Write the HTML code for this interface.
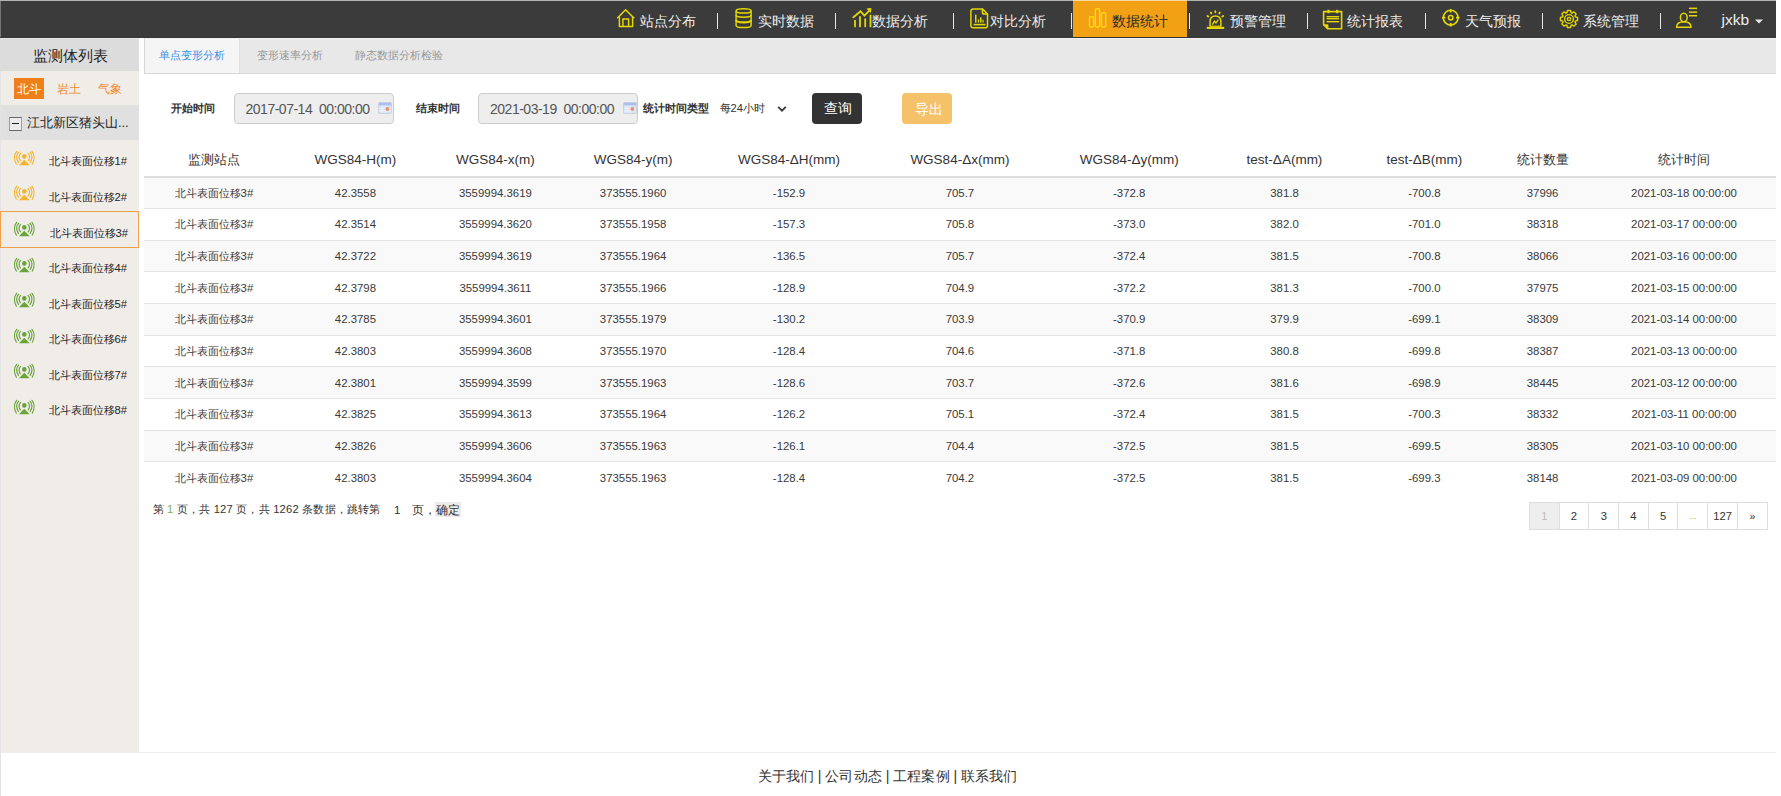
<!DOCTYPE html>
<html><head><meta charset="utf-8"><style>
*{box-sizing:border-box;margin:0;padding:0}
html,body{width:1781px;height:796px;overflow:hidden;background:#fff}
body{font-family:"Liberation Sans",sans-serif;color:#333;position:relative}
.a{position:absolute;white-space:nowrap}
svg{position:absolute;overflow:visible}
#top{position:absolute;left:0;top:0;width:1776px;height:38px;background:#3b3b3b}
#act{position:absolute;left:1073px;top:0;width:114px;height:38px;background:#f2a115}
.sep{position:absolute;top:13px;width:1px;height:16px;background:#e4e8e8}
#side{position:absolute;left:0;top:38px;width:139px;height:714px;background:#f0ede9;border-left:1px solid #e3e3e3}
#sidehd{position:absolute;left:0;top:38px;width:139px;height:33px;background:#dcdcdc}
#tabs{position:absolute;left:144px;top:38px;width:1632px;height:36px;background:#e8e8e8;border-bottom:1px solid #d8d8d8;border-left:1px solid #d8d8d8}
#tab1{position:absolute;left:145px;top:38px;width:95px;height:35px;background:#f5f5f5;border-right:1px solid #e0e0e0}
#foot{position:absolute;left:0;top:752px;width:1776px;height:44px;border-top:1px solid #eceeee;border-left:1px solid #e3e3e3}
.inp{position:absolute;top:93px;height:31px;background:#eee;border:1px solid #ccc;border-radius:4px}
.btn{position:absolute;top:93px;width:50px;height:31px;border-radius:4px}
table{position:absolute;left:144px;top:138px;border-collapse:collapse;table-layout:fixed}
td,th{text-align:center;white-space:nowrap;overflow:hidden;padding:0}
th{height:40px;font-weight:normal;font-size:14px;color:#333;border-bottom:2px solid #ddd}
td{font-size:12px;color:#333;border-top:1px solid #e4e4e4}
tr.odd td{background:#f9f9f9}
.pg{position:absolute;top:502px;height:28px;border:1px solid #ddd;font-size:12px;line-height:27px;text-align:center;color:#333}
</style></head><body>
<div id="top"><div id="act"></div></div><div class="a" style="left:0;top:0;width:1776px;height:1px;background:rgba(255,255,255,0.62)"></div><div class="a" style="left:0;top:1px;width:1px;height:37px;background:rgba(255,255,255,0.3)"></div>
<div class="sep" style="left:717px"></div>
<div class="sep" style="left:835px"></div>
<div class="sep" style="left:953px"></div>
<div class="sep" style="left:1071px"></div>
<div class="sep" style="left:1189px"></div>
<div class="sep" style="left:1307px"></div>
<div class="sep" style="left:1425px"></div>
<div class="sep" style="left:1542px"></div>
<div class="sep" style="left:1660px"></div>
<div class="a" style="left:640px;top:12px;font-size:14px;line-height:19.6px;color:#ececec;font-weight:normal;">站点分布</div>
<div class="a" style="left:757.5px;top:12px;font-size:14px;line-height:19.6px;color:#ececec;font-weight:normal;">实时数据</div>
<div class="a" style="left:871.5px;top:12px;font-size:14px;line-height:19.6px;color:#ececec;font-weight:normal;">数据分析</div>
<div class="a" style="left:989.6px;top:12px;font-size:14px;line-height:19.6px;color:#ececec;font-weight:normal;">对比分析</div>
<div class="a" style="left:1111.8px;top:12px;font-size:14px;line-height:19.6px;color:#2a2a2a;font-weight:normal;">数据统计</div>
<div class="a" style="left:1229.6px;top:12px;font-size:14px;line-height:19.6px;color:#ececec;font-weight:normal;">预警管理</div>
<div class="a" style="left:1346.6px;top:12px;font-size:14px;line-height:19.6px;color:#ececec;font-weight:normal;">统计报表</div>
<div class="a" style="left:1464.6px;top:12px;font-size:14px;line-height:19.6px;color:#ececec;font-weight:normal;">天气预报</div>
<div class="a" style="left:1583px;top:12px;font-size:14px;line-height:19.6px;color:#ececec;font-weight:normal;">系统管理</div>
<div class="a" style="left:1721.5px;top:9.0px;font-size:15.5px;line-height:21.7px;color:#ececec;font-weight:normal;">jxkb</div>
<svg style="left:1754.8px;top:18.6px" width="9" height="5"><path d="M0 0.4 L8 0.4 L4 4.4 Z" fill="#e8e8e8"/></svg>
<svg style="left:616px;top:8px" width="20" height="20" viewBox="0 0 20 20"><g fill="none" stroke="#e3d800" stroke-width="1.5" stroke-linejoin="round"><path d="M1.2 10.3 L9.6 1.8 L18.2 10.3"/><path d="M3.4 8.4 V18.6 H16.6 V8.4"/><path d="M6.9 18.6 V11.1 H12.6 V18.6"/></g></svg>
<svg style="left:735px;top:8px" width="18" height="21" viewBox="0 0 18 21"><g fill="none" stroke="#e3d800" stroke-width="1.5"><ellipse cx="8.6" cy="2.9" rx="7.5" ry="2.1"/><path d="M1.1 2.9 V17.4 Q1.1 19.6 8.6 19.6 Q16.1 19.6 16.1 17.4 V2.9"/><path d="M1.1 7 Q1.1 9.2 8.6 9.2 Q16.1 9.2 16.1 7"/><path d="M1.1 12 Q1.1 14.4 8.6 14.4 Q16.1 14.4 16.1 12" stroke-width="2.1"/></g></svg>
<svg style="left:852px;top:7px" width="20" height="21" viewBox="0 0 20 21"><g fill="none" stroke="#e3d800" stroke-width="1.8" stroke-linecap="round"><path d="M3 13.6 V19.4"/><path d="M8 9.8 V19.4"/><path d="M13.2 12.2 V19.4"/><path d="M18.5 8.5 V19.4"/><path d="M1.4 10.3 L8.5 4.2 L12.4 8.6 L17.5 3.4" stroke-linejoin="miter"/></g><path d="M14.4 1.6 L19.4 1 L18.8 6 Z" fill="#e3d800"/></svg>
<svg style="left:969px;top:7px" width="21" height="23" viewBox="0 0 21 23"><g fill="none" stroke="#e3d800" stroke-width="1.5" stroke-linejoin="round"><path d="M4.2 1.9 H13.4 L18.5 7 V18.4 Q18.5 20.8 16.1 20.8 H4.2 Q1.9 20.8 1.9 18.4 V4.2 Q1.9 1.9 4.2 1.9 Z"/><path d="M13.4 2.1 V5.2 Q13.4 7 15.2 7 H18.3"/></g><g fill="#e3d800"><rect x="6" y="7.6" width="1.5" height="8"/><rect x="8.8" y="12.4" width="1.2" height="3.2"/><rect x="11" y="10.4" width="1.5" height="5.2"/><rect x="13.4" y="12.8" width="1.2" height="2.8"/><rect x="4.6" y="16.8" width="11.8" height="1.6"/></g></svg>
<svg style="left:1087px;top:7px" width="21" height="22" viewBox="0 0 21 22"><g fill="none" stroke="#ffe800" stroke-width="1.25"><rect x="2.5" y="9.6" width="4.1" height="10.6" rx="1.8"/><rect x="8.4" y="1.6" width="4.2" height="18.6" rx="1.8"/><rect x="14.5" y="5.5" width="4.2" height="14.7" rx="1.8"/></g></svg>
<svg style="left:1205px;top:9px" width="21" height="22" viewBox="0 0 21 22"><g fill="none" stroke="#e3d800" stroke-width="1.5"><path d="M5 17.6 V12.8 Q5 6.9 10.4 6.9 Q15.9 6.9 15.9 12.8 V17.6"/><path d="M5 17.2 H15.9" stroke-width="1.2"/><path d="M7.4 15.6 L9.4 12.2 L11 14 L13.2 10.6" stroke-width="1.3"/><path d="M3.29 7.51 L2.51 6.89 M6.31 4.45 L5.89 3.55 M10.30 3.30 L10.30 2.30 M14.29 4.45 L14.71 3.55 M17.31 7.51 L18.09 6.89" stroke-width="1.9" stroke-linecap="round"/></g><g fill="#e3d800"><rect x="1.8" y="17.8" width="17.4" height="2.2"/></g></svg>
<svg style="left:1322px;top:9px" width="23" height="23" viewBox="0 0 23 23"><g fill="none" stroke="#e3d800" stroke-width="1.6" stroke-linejoin="round"><path d="M3 2.6 H19.6 V19.8 H5.6 L1.6 15.8 V2.6 Z" /><path d="M5.6 19.8 V16 H1.8"/></g><path d="M1.8 16 H5.6 V19.8 Z" fill="#e3d800"/><g fill="#e3d800"><rect x="5.4" y="0.8" width="2.2" height="3.4"/><rect x="14" y="0.8" width="2.2" height="3.4"/><rect x="4.6" y="7" width="12.4" height="1.4"/><rect x="4.6" y="9" width="12.4" height="1.4"/><rect x="4.6" y="12" width="12.4" height="1.4"/></g></svg>
<svg style="left:1440px;top:6px" width="22" height="22" viewBox="0 0 22 22"><g fill="none" stroke="#e3d800" stroke-width="1.6"><circle cx="10.7" cy="11.7" r="7.4"/><circle cx="10.7" cy="11.7" r="2.2"/><path d="M10.7 2.9 V6.4 M10.7 17 V20.5 M1.9 11.7 H5.4 M16 11.7 H19.5" stroke-width="1.8"/></g></svg>
<svg style="left:1559px;top:8px" width="21" height="22" viewBox="0 0 21 22"><g fill="none" stroke="#e3d800" stroke-width="1.4" stroke-linejoin="round"><path d="M7.85 4.76 L8.49 2.43 L11.51 2.43 L12.15 4.76 L12.89 5.07 L14.99 3.87 L17.13 6.01 L15.93 8.11 L16.24 8.85 L18.57 9.49 L18.57 12.51 L16.24 13.15 L15.93 13.89 L17.13 15.99 L14.99 18.13 L12.89 16.93 L12.15 17.24 L11.51 19.57 L8.49 19.57 L7.85 17.24 L7.11 16.93 L5.01 18.13 L2.87 15.99 L4.07 13.89 L3.76 13.15 L1.43 12.51 L1.43 9.49 L3.76 8.85 L4.07 8.11 L2.87 6.01 L5.01 3.87 L7.11 5.07 Z"/><circle cx="10" cy="11" r="4.4"/><circle cx="10" cy="11" r="1.6"/></g></svg>
<svg style="left:1675px;top:6px" width="24" height="23" viewBox="0 0 24 23"><g fill="none" stroke="#e3d800" stroke-width="1.5"><ellipse cx="8.8" cy="11.5" rx="3.4" ry="4.2"/><path d="M1.6 21.2 Q1.6 15.8 8.8 15.8 Q16 15.8 16 21.2 Z"/></g><g fill="#e3d800"><rect x="14" y="1.6" width="8" height="1.5"/><rect x="14" y="5.4" width="8" height="1.5"/><rect x="14" y="9" width="8" height="1.5"/></g></svg>
<div id="side"></div><div id="sidehd"></div>
<div class="a" style="left:32.5px;top:45.5px;font-size:14.5px;line-height:20.3px;color:#222;font-weight:normal;">监测体列表</div>
<div class="a" style="left:14px;top:78px;width:30px;height:21px;background:#ee7f1a"></div>
<div class="a" style="left:16.5px;top:80.5px;font-size:12.3px;line-height:17.22px;color:#fff;font-weight:normal;">北斗</div>
<div class="a" style="left:57px;top:80.5px;font-size:12.3px;line-height:17.22px;color:#f08a32;font-weight:normal;">岩土</div>
<div class="a" style="left:98px;top:80.5px;font-size:12.3px;line-height:17.22px;color:#f08a32;font-weight:normal;">气象</div>
<div class="a" style="left:1px;top:105px;width:138px;height:35px;background:#e0e0e0"></div>
<div class="a" style="left:9px;top:117px;width:12.5px;height:14px;border-top:1px solid #6a6a6a;border-bottom:1px solid #6a6a6a;border-left:1px solid #9a9aa8;border-right:1px solid #a89a9a;background:#ececec"></div><div class="a" style="left:12px;top:123px;width:6.5px;height:1px;background:#222"></div>
<div class="a" style="left:27px;top:113.5px;font-size:12.8px;line-height:17.92px;color:#222;font-weight:normal;">江北新区猪头山...</div>
<svg style="left:14px;top:150.5px" width="22" height="15" viewBox="0 0 22 15"><g fill="none" stroke="#f3b52e" stroke-width="1.15" stroke-linecap="round"><path d="M6.6 2.4 Q3.6 5.8 6.4 9.8"/><path d="M4.6 1.2 Q0.8 5.8 4.4 11.4"/><path d="M2.6 0.3 Q-1.6 6 2.4 13.2"/><path d="M14 2.4 Q17 5.8 14.2 9.8"/><path d="M16 1.2 Q19.8 5.8 16.2 11.4"/><path d="M18 0.3 Q22.2 6 18.2 13.2"/></g><g fill="#f3b52e"><circle cx="10.3" cy="5.4" r="2.3"/><path d="M4.9 14.2 L10.3 8.8 L15.7 14.2 Z"/></g></svg>
<div class="a" style="left:48.5px;top:154px;font-size:11.2px;line-height:15.68px;color:#222;font-weight:normal;">北斗表面位移1#</div>
<svg style="left:14px;top:186.0px" width="22" height="15" viewBox="0 0 22 15"><g fill="none" stroke="#f3b52e" stroke-width="1.15" stroke-linecap="round"><path d="M6.6 2.4 Q3.6 5.8 6.4 9.8"/><path d="M4.6 1.2 Q0.8 5.8 4.4 11.4"/><path d="M2.6 0.3 Q-1.6 6 2.4 13.2"/><path d="M14 2.4 Q17 5.8 14.2 9.8"/><path d="M16 1.2 Q19.8 5.8 16.2 11.4"/><path d="M18 0.3 Q22.2 6 18.2 13.2"/></g><g fill="#f3b52e"><circle cx="10.3" cy="5.4" r="2.3"/><path d="M4.9 14.2 L10.3 8.8 L15.7 14.2 Z"/></g></svg>
<div class="a" style="left:48.5px;top:189.5px;font-size:11.2px;line-height:15.68px;color:#222;font-weight:normal;">北斗表面位移2#</div>
<div class="a" style="left:0;top:211px;width:139px;height:37px;border:1px solid #f0a04b"></div>
<svg style="left:14px;top:222.0px" width="22" height="15" viewBox="0 0 22 15"><g fill="none" stroke="#6aa33a" stroke-width="1.15" stroke-linecap="round"><path d="M6.6 2.4 Q3.6 5.8 6.4 9.8"/><path d="M4.6 1.2 Q0.8 5.8 4.4 11.4"/><path d="M2.6 0.3 Q-1.6 6 2.4 13.2"/><path d="M14 2.4 Q17 5.8 14.2 9.8"/><path d="M16 1.2 Q19.8 5.8 16.2 11.4"/><path d="M18 0.3 Q22.2 6 18.2 13.2"/></g><g fill="#6aa33a"><circle cx="10.3" cy="5.4" r="2.3"/><path d="M4.9 14.2 L10.3 8.8 L15.7 14.2 Z"/></g></svg>
<div class="a" style="left:49.5px;top:225.5px;font-size:11.2px;line-height:15.68px;color:#222;font-weight:normal;">北斗表面位移3#</div>
<svg style="left:14px;top:257.5px" width="22" height="15" viewBox="0 0 22 15"><g fill="none" stroke="#6aa33a" stroke-width="1.15" stroke-linecap="round"><path d="M6.6 2.4 Q3.6 5.8 6.4 9.8"/><path d="M4.6 1.2 Q0.8 5.8 4.4 11.4"/><path d="M2.6 0.3 Q-1.6 6 2.4 13.2"/><path d="M14 2.4 Q17 5.8 14.2 9.8"/><path d="M16 1.2 Q19.8 5.8 16.2 11.4"/><path d="M18 0.3 Q22.2 6 18.2 13.2"/></g><g fill="#6aa33a"><circle cx="10.3" cy="5.4" r="2.3"/><path d="M4.9 14.2 L10.3 8.8 L15.7 14.2 Z"/></g></svg>
<div class="a" style="left:48.5px;top:261px;font-size:11.2px;line-height:15.68px;color:#222;font-weight:normal;">北斗表面位移4#</div>
<svg style="left:14px;top:293.0px" width="22" height="15" viewBox="0 0 22 15"><g fill="none" stroke="#6aa33a" stroke-width="1.15" stroke-linecap="round"><path d="M6.6 2.4 Q3.6 5.8 6.4 9.8"/><path d="M4.6 1.2 Q0.8 5.8 4.4 11.4"/><path d="M2.6 0.3 Q-1.6 6 2.4 13.2"/><path d="M14 2.4 Q17 5.8 14.2 9.8"/><path d="M16 1.2 Q19.8 5.8 16.2 11.4"/><path d="M18 0.3 Q22.2 6 18.2 13.2"/></g><g fill="#6aa33a"><circle cx="10.3" cy="5.4" r="2.3"/><path d="M4.9 14.2 L10.3 8.8 L15.7 14.2 Z"/></g></svg>
<div class="a" style="left:48.5px;top:296.5px;font-size:11.2px;line-height:15.68px;color:#222;font-weight:normal;">北斗表面位移5#</div>
<svg style="left:14px;top:328.5px" width="22" height="15" viewBox="0 0 22 15"><g fill="none" stroke="#6aa33a" stroke-width="1.15" stroke-linecap="round"><path d="M6.6 2.4 Q3.6 5.8 6.4 9.8"/><path d="M4.6 1.2 Q0.8 5.8 4.4 11.4"/><path d="M2.6 0.3 Q-1.6 6 2.4 13.2"/><path d="M14 2.4 Q17 5.8 14.2 9.8"/><path d="M16 1.2 Q19.8 5.8 16.2 11.4"/><path d="M18 0.3 Q22.2 6 18.2 13.2"/></g><g fill="#6aa33a"><circle cx="10.3" cy="5.4" r="2.3"/><path d="M4.9 14.2 L10.3 8.8 L15.7 14.2 Z"/></g></svg>
<div class="a" style="left:48.5px;top:332px;font-size:11.2px;line-height:15.68px;color:#222;font-weight:normal;">北斗表面位移6#</div>
<svg style="left:14px;top:364.0px" width="22" height="15" viewBox="0 0 22 15"><g fill="none" stroke="#6aa33a" stroke-width="1.15" stroke-linecap="round"><path d="M6.6 2.4 Q3.6 5.8 6.4 9.8"/><path d="M4.6 1.2 Q0.8 5.8 4.4 11.4"/><path d="M2.6 0.3 Q-1.6 6 2.4 13.2"/><path d="M14 2.4 Q17 5.8 14.2 9.8"/><path d="M16 1.2 Q19.8 5.8 16.2 11.4"/><path d="M18 0.3 Q22.2 6 18.2 13.2"/></g><g fill="#6aa33a"><circle cx="10.3" cy="5.4" r="2.3"/><path d="M4.9 14.2 L10.3 8.8 L15.7 14.2 Z"/></g></svg>
<div class="a" style="left:48.5px;top:367.5px;font-size:11.2px;line-height:15.68px;color:#222;font-weight:normal;">北斗表面位移7#</div>
<svg style="left:14px;top:399.5px" width="22" height="15" viewBox="0 0 22 15"><g fill="none" stroke="#6aa33a" stroke-width="1.15" stroke-linecap="round"><path d="M6.6 2.4 Q3.6 5.8 6.4 9.8"/><path d="M4.6 1.2 Q0.8 5.8 4.4 11.4"/><path d="M2.6 0.3 Q-1.6 6 2.4 13.2"/><path d="M14 2.4 Q17 5.8 14.2 9.8"/><path d="M16 1.2 Q19.8 5.8 16.2 11.4"/><path d="M18 0.3 Q22.2 6 18.2 13.2"/></g><g fill="#6aa33a"><circle cx="10.3" cy="5.4" r="2.3"/><path d="M4.9 14.2 L10.3 8.8 L15.7 14.2 Z"/></g></svg>
<div class="a" style="left:48.5px;top:403px;font-size:11.2px;line-height:15.68px;color:#222;font-weight:normal;">北斗表面位移8#</div>
<div id="tabs"></div><div id="tab1"></div>
<div class="a" style="left:0;top:37px;width:1776px;height:1px;background:#363636"></div><div class="a" style="left:0;top:38px;width:139px;height:1px;background:#e6e6e6"></div><div class="a" style="left:145px;top:38px;width:1631px;height:1px;background:#f1f1f1"></div>
<div class="a" style="left:158.5px;top:48px;font-size:11.3px;line-height:15.82px;color:#3a8ee6;font-weight:normal;">单点变形分析</div>
<div class="a" style="left:256.5px;top:48px;font-size:11.3px;line-height:15.82px;color:#999;font-weight:normal;">变形速率分析</div>
<div class="a" style="left:354.5px;top:48px;font-size:11.3px;line-height:15.82px;color:#999;font-weight:normal;">静态数据分析检验</div>
<div class="a" style="left:171px;top:101px;font-size:11.2px;line-height:15.68px;color:#333;font-weight:bold;">开始时间</div>
<div class="inp" style="left:234px;width:160px"></div>
<div class="a" style="left:245.5px;top:99.5px;font-size:14px;line-height:19.6px;color:#555;font-weight:normal;letter-spacing:-0.49px">2017-07-14&nbsp;&nbsp;00:00:00</div>
<svg style="left:378px;top:102px" width="14" height="12" viewBox="0 0 14 12"><rect x="0.5" y="0.5" width="13" height="11" rx="1" fill="#d9e3f7" stroke="#c4ccd8" stroke-width="0.8"/><rect x="0.8" y="0.8" width="12.4" height="2.6" fill="#a9bff0"/><g stroke="#f4f7fd" stroke-width="0.8"><path d="M4.3 3.5 V11 M7.6 3.5 V11 M0.8 6.3 H13 M0.8 8.9 H13"/></g><circle cx="9.3" cy="7" r="1.9" fill="#ee8c6e"/></svg>
<div class="a" style="left:415.5px;top:101px;font-size:11.2px;line-height:15.68px;color:#333;font-weight:bold;">结束时间</div>
<div class="inp" style="left:478px;width:160px"></div>
<div class="a" style="left:490px;top:99.5px;font-size:14px;line-height:19.6px;color:#555;font-weight:normal;letter-spacing:-0.49px">2021-03-19&nbsp;&nbsp;00:00:00</div>
<svg style="left:623px;top:102px" width="14" height="12" viewBox="0 0 14 12"><rect x="0.5" y="0.5" width="13" height="11" rx="1" fill="#d9e3f7" stroke="#c4ccd8" stroke-width="0.8"/><rect x="0.8" y="0.8" width="12.4" height="2.6" fill="#a9bff0"/><g stroke="#f4f7fd" stroke-width="0.8"><path d="M4.3 3.5 V11 M7.6 3.5 V11 M0.8 6.3 H13 M0.8 8.9 H13"/></g><circle cx="9.3" cy="7" r="1.9" fill="#ee8c6e"/></svg>
<div class="a" style="left:642.5px;top:101px;font-size:11.2px;line-height:15.68px;color:#333;font-weight:bold;">统计时间类型</div>
<div class="a" style="left:719.5px;top:101.3px;font-size:11.1px;line-height:15.54px;color:#333;font-weight:normal;">每24小时</div>
<svg style="left:777px;top:104.5px" width="10" height="8" viewBox="0 0 10 8"><path d="M1.2 1.9 L5 5.6 L8.8 1.9" fill="none" stroke="#3a3a3a" stroke-width="1.9"/></svg>
<div class="btn" style="left:812px;background:#333"></div>
<div class="a" style="left:824px;top:99.3px;font-size:13.6px;line-height:19.04px;color:#fff;font-weight:normal;">查询</div>
<div class="btn" style="left:902px;background:#f5c26a"></div>
<div class="a" style="left:914.5px;top:99.5px;font-size:13.6px;line-height:19.04px;color:#fff;font-weight:normal;">导出</div>
<div class="a" style="left:113.9px;top:151px;width:200px;text-align:center;font-size:13px;line-height:18px;color:#333">监测站点</div>
<div class="a" style="left:255.39999999999998px;top:151px;width:200px;text-align:center;font-size:13.5px;line-height:18px;color:#333">WGS84-H(m)</div>
<div class="a" style="left:395.4px;top:151px;width:200px;text-align:center;font-size:13.5px;line-height:18px;color:#333">WGS84-x(m)</div>
<div class="a" style="left:533.1px;top:151px;width:200px;text-align:center;font-size:13.5px;line-height:18px;color:#333">WGS84-y(m)</div>
<div class="a" style="left:689.0px;top:151px;width:200px;text-align:center;font-size:13.5px;line-height:18px;color:#333">WGS84-ΔH(mm)</div>
<div class="a" style="left:859.9px;top:151px;width:200px;text-align:center;font-size:13.5px;line-height:18px;color:#333">WGS84-Δx(mm)</div>
<div class="a" style="left:1029.2px;top:151px;width:200px;text-align:center;font-size:13.5px;line-height:18px;color:#333">WGS84-Δy(mm)</div>
<div class="a" style="left:1184.5px;top:151px;width:200px;text-align:center;font-size:13.5px;line-height:18px;color:#333">test-ΔA(mm)</div>
<div class="a" style="left:1324.4px;top:151px;width:200px;text-align:center;font-size:13.5px;line-height:18px;color:#333">test-ΔB(mm)</div>
<div class="a" style="left:1442.6px;top:151px;width:200px;text-align:center;font-size:13px;line-height:18px;color:#333">统计数量</div>
<div class="a" style="left:1584.0px;top:151px;width:200px;text-align:center;font-size:13px;line-height:18px;color:#333">统计时间</div>
<div class="a" style="left:144px;top:177.40px;width:1632px;height:31.65px;background:#f9f9f9;border-bottom:1px solid #e4e4e4"></div>
<div class="a" style="left:113.9px;top:184.70px;width:200px;text-align:center;font-size:11.4px;line-height:16px;color:#3a3a3a">北斗表面位移3#</div>
<div class="a" style="left:255.39999999999998px;top:184.70px;width:200px;text-align:center;font-size:11.4px;line-height:16px;color:#3a3a3a">42.3558</div>
<div class="a" style="left:395.4px;top:184.70px;width:200px;text-align:center;font-size:11.4px;line-height:16px;color:#3a3a3a">3559994.3619</div>
<div class="a" style="left:533.1px;top:184.70px;width:200px;text-align:center;font-size:11.4px;line-height:16px;color:#3a3a3a">373555.1960</div>
<div class="a" style="left:689.0px;top:184.70px;width:200px;text-align:center;font-size:11.4px;line-height:16px;color:#3a3a3a">-152.9</div>
<div class="a" style="left:859.9px;top:184.70px;width:200px;text-align:center;font-size:11.4px;line-height:16px;color:#3a3a3a">705.7</div>
<div class="a" style="left:1029.2px;top:184.70px;width:200px;text-align:center;font-size:11.4px;line-height:16px;color:#3a3a3a">-372.8</div>
<div class="a" style="left:1184.5px;top:184.70px;width:200px;text-align:center;font-size:11.4px;line-height:16px;color:#3a3a3a">381.8</div>
<div class="a" style="left:1324.4px;top:184.70px;width:200px;text-align:center;font-size:11.4px;line-height:16px;color:#3a3a3a">-700.8</div>
<div class="a" style="left:1442.6px;top:184.70px;width:200px;text-align:center;font-size:11.4px;line-height:16px;color:#3a3a3a">37996</div>
<div class="a" style="left:1584.0px;top:184.70px;width:200px;text-align:center;font-size:11.4px;line-height:16px;color:#3a3a3a">2021-03-18 00:00:00</div>
<div class="a" style="left:144px;top:209.05px;width:1632px;height:31.65px;background:#fff;border-bottom:1px solid #e4e4e4"></div>
<div class="a" style="left:113.9px;top:216.35px;width:200px;text-align:center;font-size:11.4px;line-height:16px;color:#3a3a3a">北斗表面位移3#</div>
<div class="a" style="left:255.39999999999998px;top:216.35px;width:200px;text-align:center;font-size:11.4px;line-height:16px;color:#3a3a3a">42.3514</div>
<div class="a" style="left:395.4px;top:216.35px;width:200px;text-align:center;font-size:11.4px;line-height:16px;color:#3a3a3a">3559994.3620</div>
<div class="a" style="left:533.1px;top:216.35px;width:200px;text-align:center;font-size:11.4px;line-height:16px;color:#3a3a3a">373555.1958</div>
<div class="a" style="left:689.0px;top:216.35px;width:200px;text-align:center;font-size:11.4px;line-height:16px;color:#3a3a3a">-157.3</div>
<div class="a" style="left:859.9px;top:216.35px;width:200px;text-align:center;font-size:11.4px;line-height:16px;color:#3a3a3a">705.8</div>
<div class="a" style="left:1029.2px;top:216.35px;width:200px;text-align:center;font-size:11.4px;line-height:16px;color:#3a3a3a">-373.0</div>
<div class="a" style="left:1184.5px;top:216.35px;width:200px;text-align:center;font-size:11.4px;line-height:16px;color:#3a3a3a">382.0</div>
<div class="a" style="left:1324.4px;top:216.35px;width:200px;text-align:center;font-size:11.4px;line-height:16px;color:#3a3a3a">-701.0</div>
<div class="a" style="left:1442.6px;top:216.35px;width:200px;text-align:center;font-size:11.4px;line-height:16px;color:#3a3a3a">38318</div>
<div class="a" style="left:1584.0px;top:216.35px;width:200px;text-align:center;font-size:11.4px;line-height:16px;color:#3a3a3a">2021-03-17 00:00:00</div>
<div class="a" style="left:144px;top:240.70px;width:1632px;height:31.65px;background:#f9f9f9;border-bottom:1px solid #e4e4e4"></div>
<div class="a" style="left:113.9px;top:248.00px;width:200px;text-align:center;font-size:11.4px;line-height:16px;color:#3a3a3a">北斗表面位移3#</div>
<div class="a" style="left:255.39999999999998px;top:248.00px;width:200px;text-align:center;font-size:11.4px;line-height:16px;color:#3a3a3a">42.3722</div>
<div class="a" style="left:395.4px;top:248.00px;width:200px;text-align:center;font-size:11.4px;line-height:16px;color:#3a3a3a">3559994.3619</div>
<div class="a" style="left:533.1px;top:248.00px;width:200px;text-align:center;font-size:11.4px;line-height:16px;color:#3a3a3a">373555.1964</div>
<div class="a" style="left:689.0px;top:248.00px;width:200px;text-align:center;font-size:11.4px;line-height:16px;color:#3a3a3a">-136.5</div>
<div class="a" style="left:859.9px;top:248.00px;width:200px;text-align:center;font-size:11.4px;line-height:16px;color:#3a3a3a">705.7</div>
<div class="a" style="left:1029.2px;top:248.00px;width:200px;text-align:center;font-size:11.4px;line-height:16px;color:#3a3a3a">-372.4</div>
<div class="a" style="left:1184.5px;top:248.00px;width:200px;text-align:center;font-size:11.4px;line-height:16px;color:#3a3a3a">381.5</div>
<div class="a" style="left:1324.4px;top:248.00px;width:200px;text-align:center;font-size:11.4px;line-height:16px;color:#3a3a3a">-700.8</div>
<div class="a" style="left:1442.6px;top:248.00px;width:200px;text-align:center;font-size:11.4px;line-height:16px;color:#3a3a3a">38066</div>
<div class="a" style="left:1584.0px;top:248.00px;width:200px;text-align:center;font-size:11.4px;line-height:16px;color:#3a3a3a">2021-03-16 00:00:00</div>
<div class="a" style="left:144px;top:272.35px;width:1632px;height:31.65px;background:#fff;border-bottom:1px solid #e4e4e4"></div>
<div class="a" style="left:113.9px;top:279.65px;width:200px;text-align:center;font-size:11.4px;line-height:16px;color:#3a3a3a">北斗表面位移3#</div>
<div class="a" style="left:255.39999999999998px;top:279.65px;width:200px;text-align:center;font-size:11.4px;line-height:16px;color:#3a3a3a">42.3798</div>
<div class="a" style="left:395.4px;top:279.65px;width:200px;text-align:center;font-size:11.4px;line-height:16px;color:#3a3a3a">3559994.3611</div>
<div class="a" style="left:533.1px;top:279.65px;width:200px;text-align:center;font-size:11.4px;line-height:16px;color:#3a3a3a">373555.1966</div>
<div class="a" style="left:689.0px;top:279.65px;width:200px;text-align:center;font-size:11.4px;line-height:16px;color:#3a3a3a">-128.9</div>
<div class="a" style="left:859.9px;top:279.65px;width:200px;text-align:center;font-size:11.4px;line-height:16px;color:#3a3a3a">704.9</div>
<div class="a" style="left:1029.2px;top:279.65px;width:200px;text-align:center;font-size:11.4px;line-height:16px;color:#3a3a3a">-372.2</div>
<div class="a" style="left:1184.5px;top:279.65px;width:200px;text-align:center;font-size:11.4px;line-height:16px;color:#3a3a3a">381.3</div>
<div class="a" style="left:1324.4px;top:279.65px;width:200px;text-align:center;font-size:11.4px;line-height:16px;color:#3a3a3a">-700.0</div>
<div class="a" style="left:1442.6px;top:279.65px;width:200px;text-align:center;font-size:11.4px;line-height:16px;color:#3a3a3a">37975</div>
<div class="a" style="left:1584.0px;top:279.65px;width:200px;text-align:center;font-size:11.4px;line-height:16px;color:#3a3a3a">2021-03-15 00:00:00</div>
<div class="a" style="left:144px;top:304.00px;width:1632px;height:31.65px;background:#f9f9f9;border-bottom:1px solid #e4e4e4"></div>
<div class="a" style="left:113.9px;top:311.30px;width:200px;text-align:center;font-size:11.4px;line-height:16px;color:#3a3a3a">北斗表面位移3#</div>
<div class="a" style="left:255.39999999999998px;top:311.30px;width:200px;text-align:center;font-size:11.4px;line-height:16px;color:#3a3a3a">42.3785</div>
<div class="a" style="left:395.4px;top:311.30px;width:200px;text-align:center;font-size:11.4px;line-height:16px;color:#3a3a3a">3559994.3601</div>
<div class="a" style="left:533.1px;top:311.30px;width:200px;text-align:center;font-size:11.4px;line-height:16px;color:#3a3a3a">373555.1979</div>
<div class="a" style="left:689.0px;top:311.30px;width:200px;text-align:center;font-size:11.4px;line-height:16px;color:#3a3a3a">-130.2</div>
<div class="a" style="left:859.9px;top:311.30px;width:200px;text-align:center;font-size:11.4px;line-height:16px;color:#3a3a3a">703.9</div>
<div class="a" style="left:1029.2px;top:311.30px;width:200px;text-align:center;font-size:11.4px;line-height:16px;color:#3a3a3a">-370.9</div>
<div class="a" style="left:1184.5px;top:311.30px;width:200px;text-align:center;font-size:11.4px;line-height:16px;color:#3a3a3a">379.9</div>
<div class="a" style="left:1324.4px;top:311.30px;width:200px;text-align:center;font-size:11.4px;line-height:16px;color:#3a3a3a">-699.1</div>
<div class="a" style="left:1442.6px;top:311.30px;width:200px;text-align:center;font-size:11.4px;line-height:16px;color:#3a3a3a">38309</div>
<div class="a" style="left:1584.0px;top:311.30px;width:200px;text-align:center;font-size:11.4px;line-height:16px;color:#3a3a3a">2021-03-14 00:00:00</div>
<div class="a" style="left:144px;top:335.65px;width:1632px;height:31.65px;background:#fff;border-bottom:1px solid #e4e4e4"></div>
<div class="a" style="left:113.9px;top:342.95px;width:200px;text-align:center;font-size:11.4px;line-height:16px;color:#3a3a3a">北斗表面位移3#</div>
<div class="a" style="left:255.39999999999998px;top:342.95px;width:200px;text-align:center;font-size:11.4px;line-height:16px;color:#3a3a3a">42.3803</div>
<div class="a" style="left:395.4px;top:342.95px;width:200px;text-align:center;font-size:11.4px;line-height:16px;color:#3a3a3a">3559994.3608</div>
<div class="a" style="left:533.1px;top:342.95px;width:200px;text-align:center;font-size:11.4px;line-height:16px;color:#3a3a3a">373555.1970</div>
<div class="a" style="left:689.0px;top:342.95px;width:200px;text-align:center;font-size:11.4px;line-height:16px;color:#3a3a3a">-128.4</div>
<div class="a" style="left:859.9px;top:342.95px;width:200px;text-align:center;font-size:11.4px;line-height:16px;color:#3a3a3a">704.6</div>
<div class="a" style="left:1029.2px;top:342.95px;width:200px;text-align:center;font-size:11.4px;line-height:16px;color:#3a3a3a">-371.8</div>
<div class="a" style="left:1184.5px;top:342.95px;width:200px;text-align:center;font-size:11.4px;line-height:16px;color:#3a3a3a">380.8</div>
<div class="a" style="left:1324.4px;top:342.95px;width:200px;text-align:center;font-size:11.4px;line-height:16px;color:#3a3a3a">-699.8</div>
<div class="a" style="left:1442.6px;top:342.95px;width:200px;text-align:center;font-size:11.4px;line-height:16px;color:#3a3a3a">38387</div>
<div class="a" style="left:1584.0px;top:342.95px;width:200px;text-align:center;font-size:11.4px;line-height:16px;color:#3a3a3a">2021-03-13 00:00:00</div>
<div class="a" style="left:144px;top:367.30px;width:1632px;height:31.65px;background:#f9f9f9;border-bottom:1px solid #e4e4e4"></div>
<div class="a" style="left:113.9px;top:374.60px;width:200px;text-align:center;font-size:11.4px;line-height:16px;color:#3a3a3a">北斗表面位移3#</div>
<div class="a" style="left:255.39999999999998px;top:374.60px;width:200px;text-align:center;font-size:11.4px;line-height:16px;color:#3a3a3a">42.3801</div>
<div class="a" style="left:395.4px;top:374.60px;width:200px;text-align:center;font-size:11.4px;line-height:16px;color:#3a3a3a">3559994.3599</div>
<div class="a" style="left:533.1px;top:374.60px;width:200px;text-align:center;font-size:11.4px;line-height:16px;color:#3a3a3a">373555.1963</div>
<div class="a" style="left:689.0px;top:374.60px;width:200px;text-align:center;font-size:11.4px;line-height:16px;color:#3a3a3a">-128.6</div>
<div class="a" style="left:859.9px;top:374.60px;width:200px;text-align:center;font-size:11.4px;line-height:16px;color:#3a3a3a">703.7</div>
<div class="a" style="left:1029.2px;top:374.60px;width:200px;text-align:center;font-size:11.4px;line-height:16px;color:#3a3a3a">-372.6</div>
<div class="a" style="left:1184.5px;top:374.60px;width:200px;text-align:center;font-size:11.4px;line-height:16px;color:#3a3a3a">381.6</div>
<div class="a" style="left:1324.4px;top:374.60px;width:200px;text-align:center;font-size:11.4px;line-height:16px;color:#3a3a3a">-698.9</div>
<div class="a" style="left:1442.6px;top:374.60px;width:200px;text-align:center;font-size:11.4px;line-height:16px;color:#3a3a3a">38445</div>
<div class="a" style="left:1584.0px;top:374.60px;width:200px;text-align:center;font-size:11.4px;line-height:16px;color:#3a3a3a">2021-03-12 00:00:00</div>
<div class="a" style="left:144px;top:398.95px;width:1632px;height:31.65px;background:#fff;border-bottom:1px solid #e4e4e4"></div>
<div class="a" style="left:113.9px;top:406.25px;width:200px;text-align:center;font-size:11.4px;line-height:16px;color:#3a3a3a">北斗表面位移3#</div>
<div class="a" style="left:255.39999999999998px;top:406.25px;width:200px;text-align:center;font-size:11.4px;line-height:16px;color:#3a3a3a">42.3825</div>
<div class="a" style="left:395.4px;top:406.25px;width:200px;text-align:center;font-size:11.4px;line-height:16px;color:#3a3a3a">3559994.3613</div>
<div class="a" style="left:533.1px;top:406.25px;width:200px;text-align:center;font-size:11.4px;line-height:16px;color:#3a3a3a">373555.1964</div>
<div class="a" style="left:689.0px;top:406.25px;width:200px;text-align:center;font-size:11.4px;line-height:16px;color:#3a3a3a">-126.2</div>
<div class="a" style="left:859.9px;top:406.25px;width:200px;text-align:center;font-size:11.4px;line-height:16px;color:#3a3a3a">705.1</div>
<div class="a" style="left:1029.2px;top:406.25px;width:200px;text-align:center;font-size:11.4px;line-height:16px;color:#3a3a3a">-372.4</div>
<div class="a" style="left:1184.5px;top:406.25px;width:200px;text-align:center;font-size:11.4px;line-height:16px;color:#3a3a3a">381.5</div>
<div class="a" style="left:1324.4px;top:406.25px;width:200px;text-align:center;font-size:11.4px;line-height:16px;color:#3a3a3a">-700.3</div>
<div class="a" style="left:1442.6px;top:406.25px;width:200px;text-align:center;font-size:11.4px;line-height:16px;color:#3a3a3a">38332</div>
<div class="a" style="left:1584.0px;top:406.25px;width:200px;text-align:center;font-size:11.4px;line-height:16px;color:#3a3a3a">2021-03-11 00:00:00</div>
<div class="a" style="left:144px;top:430.60px;width:1632px;height:31.65px;background:#f9f9f9;border-bottom:1px solid #e4e4e4"></div>
<div class="a" style="left:113.9px;top:437.90px;width:200px;text-align:center;font-size:11.4px;line-height:16px;color:#3a3a3a">北斗表面位移3#</div>
<div class="a" style="left:255.39999999999998px;top:437.90px;width:200px;text-align:center;font-size:11.4px;line-height:16px;color:#3a3a3a">42.3826</div>
<div class="a" style="left:395.4px;top:437.90px;width:200px;text-align:center;font-size:11.4px;line-height:16px;color:#3a3a3a">3559994.3606</div>
<div class="a" style="left:533.1px;top:437.90px;width:200px;text-align:center;font-size:11.4px;line-height:16px;color:#3a3a3a">373555.1963</div>
<div class="a" style="left:689.0px;top:437.90px;width:200px;text-align:center;font-size:11.4px;line-height:16px;color:#3a3a3a">-126.1</div>
<div class="a" style="left:859.9px;top:437.90px;width:200px;text-align:center;font-size:11.4px;line-height:16px;color:#3a3a3a">704.4</div>
<div class="a" style="left:1029.2px;top:437.90px;width:200px;text-align:center;font-size:11.4px;line-height:16px;color:#3a3a3a">-372.5</div>
<div class="a" style="left:1184.5px;top:437.90px;width:200px;text-align:center;font-size:11.4px;line-height:16px;color:#3a3a3a">381.5</div>
<div class="a" style="left:1324.4px;top:437.90px;width:200px;text-align:center;font-size:11.4px;line-height:16px;color:#3a3a3a">-699.5</div>
<div class="a" style="left:1442.6px;top:437.90px;width:200px;text-align:center;font-size:11.4px;line-height:16px;color:#3a3a3a">38305</div>
<div class="a" style="left:1584.0px;top:437.90px;width:200px;text-align:center;font-size:11.4px;line-height:16px;color:#3a3a3a">2021-03-10 00:00:00</div>
<div class="a" style="left:144px;top:462.25px;width:1632px;height:31.65px;background:#fff;"></div>
<div class="a" style="left:113.9px;top:469.55px;width:200px;text-align:center;font-size:11.4px;line-height:16px;color:#3a3a3a">北斗表面位移3#</div>
<div class="a" style="left:255.39999999999998px;top:469.55px;width:200px;text-align:center;font-size:11.4px;line-height:16px;color:#3a3a3a">42.3803</div>
<div class="a" style="left:395.4px;top:469.55px;width:200px;text-align:center;font-size:11.4px;line-height:16px;color:#3a3a3a">3559994.3604</div>
<div class="a" style="left:533.1px;top:469.55px;width:200px;text-align:center;font-size:11.4px;line-height:16px;color:#3a3a3a">373555.1963</div>
<div class="a" style="left:689.0px;top:469.55px;width:200px;text-align:center;font-size:11.4px;line-height:16px;color:#3a3a3a">-128.4</div>
<div class="a" style="left:859.9px;top:469.55px;width:200px;text-align:center;font-size:11.4px;line-height:16px;color:#3a3a3a">704.2</div>
<div class="a" style="left:1029.2px;top:469.55px;width:200px;text-align:center;font-size:11.4px;line-height:16px;color:#3a3a3a">-372.5</div>
<div class="a" style="left:1184.5px;top:469.55px;width:200px;text-align:center;font-size:11.4px;line-height:16px;color:#3a3a3a">381.5</div>
<div class="a" style="left:1324.4px;top:469.55px;width:200px;text-align:center;font-size:11.4px;line-height:16px;color:#3a3a3a">-699.3</div>
<div class="a" style="left:1442.6px;top:469.55px;width:200px;text-align:center;font-size:11.4px;line-height:16px;color:#3a3a3a">38148</div>
<div class="a" style="left:1584.0px;top:469.55px;width:200px;text-align:center;font-size:11.4px;line-height:16px;color:#3a3a3a">2021-03-09 00:00:00</div>
<div class="a" style="left:144px;top:176px;width:1632px;height:2px;background:#dddddd"></div>
<div class="a" style="left:435px;top:502px;width:26px;height:15px;background:#ececec"></div>
<div class="a" style="left:152.5px;top:501.8px;font-size:11.2px;line-height:15.68px;color:#333;font-weight:normal;letter-spacing:0.2px">第 <span style="color:#7cb342">1</span> 页，共 127 页，共 1262 条数据，跳转第</div>
<div class="a" style="left:394px;top:501.8px;font-size:11.5px;line-height:16.1px;color:#333;font-weight:normal;">1</div>
<div class="a" style="left:412px;top:501.8px;font-size:11.5px;line-height:16.1px;color:#333;font-weight:normal;">页，</div>
<div class="a" style="left:436px;top:501.8px;font-size:11.5px;line-height:16.1px;color:#333;font-weight:normal;">确定</div>
<div class="pg" style="left:1528.8px;width:30.9px;background:#eee;color:#bbb;font-size:11.2px">1</div>
<div class="pg" style="left:1558.7px;width:30.6px;background:#fff;color:#333;font-size:11.2px">2</div>
<div class="pg" style="left:1588.3px;width:30.9px;background:#fff;color:#333;font-size:11.2px">3</div>
<div class="pg" style="left:1618.2px;width:30.5px;background:#fff;color:#333;font-size:11.2px">4</div>
<div class="pg" style="left:1647.7px;width:30.7px;background:#fff;color:#333;font-size:11.2px">5</div>
<div class="pg" style="left:1677.4px;width:30.9px;background:#fff;color:#8bc34a;font-size:9px">...</div>
<div class="pg" style="left:1707.3px;width:30.8px;background:#fff;color:#333;font-size:11.2px">127</div>
<div class="pg" style="left:1737.1px;width:30.6px;background:#fff;color:#333;font-size:10.5px">»</div>
<div id="foot"></div>
<div class="a" style="left:757.5px;top:766.5px;font-size:14.1px;line-height:19.74px;color:#333;font-weight:normal;letter-spacing:0.06px">关于我们 | 公司动态 | 工程案例 | 联系我们</div>
</body></html>
